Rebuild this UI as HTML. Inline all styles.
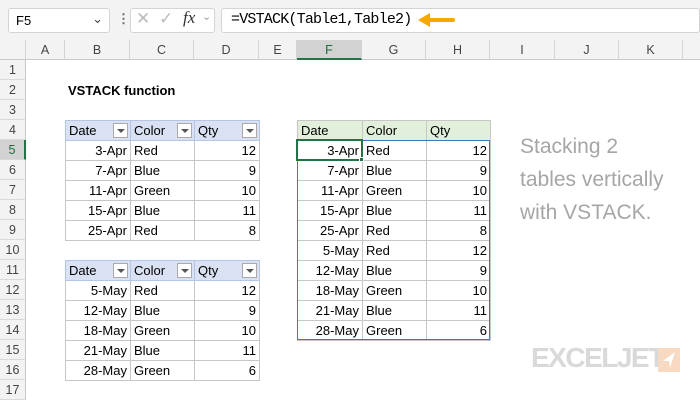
<!DOCTYPE html><html><head><style>
*{box-sizing:border-box;margin:0;padding:0}
body{width:700px;height:400px;overflow:hidden;background:#fff;font-family:"Liberation Sans",Arial,sans-serif;font-size:13px;color:#000;position:relative}
.a{position:absolute}
.ch{position:absolute;top:40px;height:20px;line-height:20px;text-align:center;color:#444;font-size:12.5px;border-right:1px solid #d4d4d4;border-bottom:1px solid #c8c8c8;background:#f3f3f3}
.rh{position:absolute;left:0;width:26px;height:20px;line-height:20px;text-align:center;color:#444;font-size:12.5px;border-bottom:1px solid #d9d9d9;background:#f3f3f3;border-right:1px solid #c8c8c8}
table{position:absolute;border-collapse:collapse;table-layout:fixed}
td{height:20px;padding:0 3px;border:1px solid #c6c6c6;white-space:nowrap;overflow:hidden;line-height:18px}
td.r{text-align:right}
.t1 tr:first-child td{background:#d9e1f2;border-color:#b4c6e7}
.t3 tr:first-child td{background:#e2efda}
.dd{float:right;width:15px;height:15px;border:1px solid #aaa;background:#fff;margin-top:1px;margin-right:-1px;position:relative}
.dd:after{content:"";position:absolute;left:3px;top:5px;border-left:4px solid transparent;border-right:4px solid transparent;border-top:4px solid #555}
</style></head><body>
<div class="a" style="left:0;top:0;width:700px;height:40px;background:#f3f3f3"></div>
<div class="a" style="left:8px;top:8px;width:102px;height:25px;background:#fff;border:1px solid #d4d4d4;border-radius:3px;padding:4px 7px;font-size:13px">F5<span style="position:absolute;right:6px;top:2px;color:#444">&#8964;</span></div>
<div class="a" style="left:117px;top:11px;color:#666;font-weight:bold">&#8942;</div>
<div class="a" style="left:130px;top:8px;width:85px;height:25px;background:#fff;border:1px solid #d4d4d4;border-radius:3px"></div>
<div class="a" style="left:136px;top:9px;color:#bbb;font-size:17px">&#x2715;</div>
<div class="a" style="left:159px;top:9px;color:#bbb;font-size:17px">&#x2713;</div>
<div class="a" style="left:183px;top:8px;font-family:'Liberation Serif',serif;font-style:italic;font-size:17px;color:#333">fx</div>
<div class="a" style="left:202px;top:10px;color:#999;font-size:11px">&#8964;</div>
<div class="a" style="left:221px;top:8px;width:479px;height:25px;background:#fff;border:1px solid #d4d4d4;border-radius:3px"></div>
<div class="a" style="left:231px;top:11px;font-family:'Liberation Mono',monospace;font-size:15px;letter-spacing:-0.8px">=VSTACK(Table1,Table2)</div>
<svg class="a" style="left:416px;top:12px" width="40" height="16"><path d="M10 8H37" stroke="#f5a800" stroke-width="4" stroke-linecap="round"/><path d="M2 8L14 1V15Z" fill="#f5a800"/></svg>
<div class="ch" style="left:0;width:26px"></div>
<div class="ch" style="left:26px;width:39px">A</div><div class="ch" style="left:65px;width:65px">B</div><div class="ch" style="left:130px;width:64px">C</div><div class="ch" style="left:194px;width:65px">D</div><div class="ch" style="left:259px;width:38px">E</div><div class="ch" style="left:297px;width:65px;background:#d2d2d2;color:#1d6b3a;border-bottom:2px solid #217346">F</div><div class="ch" style="left:362px;width:64px">G</div><div class="ch" style="left:426px;width:64px">H</div><div class="ch" style="left:490px;width:65px">I</div><div class="ch" style="left:555px;width:64px">J</div><div class="ch" style="left:619px;width:64px">K</div><div class="ch" style="left:683px;width:30px"></div>
<div class="rh" style="top:60px">1</div><div class="rh" style="top:80px">2</div><div class="rh" style="top:100px">3</div><div class="rh" style="top:120px">4</div><div class="rh" style="top:140px;background:#d2d2d2;color:#1d6b3a;border-right:2px solid #217346">5</div><div class="rh" style="top:160px">6</div><div class="rh" style="top:180px">7</div><div class="rh" style="top:200px">8</div><div class="rh" style="top:220px">9</div><div class="rh" style="top:240px">10</div><div class="rh" style="top:260px">11</div><div class="rh" style="top:280px">12</div><div class="rh" style="top:300px">13</div><div class="rh" style="top:320px">14</div><div class="rh" style="top:340px">15</div><div class="rh" style="top:360px">16</div><div class="rh" style="top:380px">17</div>
<div class="a" style="left:68px;top:83px;font-weight:bold">VSTACK function</div>
<table class="t1" style="left:65px;top:120px;width:194px"><colgroup><col style="width:65px"><col style="width:64px"><col style="width:65px"></colgroup>
<tr><td>Date<span class="dd"></span></td><td>Color<span class="dd"></span></td><td>Qty<span class="dd"></span></td></tr>
<tr><td class="r">3-Apr</td><td>Red</td><td class="r">12</td></tr>
<tr><td class="r">7-Apr</td><td>Blue</td><td class="r">9</td></tr>
<tr><td class="r">11-Apr</td><td>Green</td><td class="r">10</td></tr>
<tr><td class="r">15-Apr</td><td>Blue</td><td class="r">11</td></tr>
<tr><td class="r">25-Apr</td><td>Red</td><td class="r">8</td></tr></table>
<table class="t1" style="left:65px;top:260px;width:194px"><colgroup><col style="width:65px"><col style="width:64px"><col style="width:65px"></colgroup>
<tr><td>Date<span class="dd"></span></td><td>Color<span class="dd"></span></td><td>Qty<span class="dd"></span></td></tr>
<tr><td class="r">5-May</td><td>Red</td><td class="r">12</td></tr>
<tr><td class="r">12-May</td><td>Blue</td><td class="r">9</td></tr>
<tr><td class="r">18-May</td><td>Green</td><td class="r">10</td></tr>
<tr><td class="r">21-May</td><td>Blue</td><td class="r">11</td></tr>
<tr><td class="r">28-May</td><td>Green</td><td class="r">6</td></tr></table>
<table class="t3" style="left:297px;top:120px;width:193px"><colgroup><col style="width:65px"><col style="width:64px"><col style="width:64px"></colgroup>
<tr><td>Date</td><td>Color</td><td>Qty</td></tr>
<tr><td class="r">3-Apr</td><td>Red</td><td class="r">12</td></tr>
<tr><td class="r">7-Apr</td><td>Blue</td><td class="r">9</td></tr>
<tr><td class="r">11-Apr</td><td>Green</td><td class="r">10</td></tr>
<tr><td class="r">15-Apr</td><td>Blue</td><td class="r">11</td></tr>
<tr><td class="r">25-Apr</td><td>Red</td><td class="r">8</td></tr>
<tr><td class="r">5-May</td><td>Red</td><td class="r">12</td></tr>
<tr><td class="r">12-May</td><td>Blue</td><td class="r">9</td></tr>
<tr><td class="r">18-May</td><td>Green</td><td class="r">10</td></tr>
<tr><td class="r">21-May</td><td>Blue</td><td class="r">11</td></tr>
<tr><td class="r">28-May</td><td>Green</td><td class="r">6</td></tr></table>
<div class="a" style="left:297px;top:140px;width:193px;height:200px;border:1.5px solid #4472c4"></div>
<div class="a" style="left:296px;top:139px;width:67px;height:22px;border:2px solid #217346"></div>
<div class="a" style="left:359px;top:157px;width:5px;height:5px;background:#217346;border:1px solid #fff"></div>
<div class="a" style="left:520px;top:130px;color:#a6a6a6;font-size:21px;line-height:33px">Stacking 2<br>tables vertically<br>with VSTACK.</div>
<div class="a" style="left:531px;top:342px;color:#d9d9d9;font-weight:bold;font-size:28px;letter-spacing:-1.5px">EXCELJET</div>
<div class="a" style="left:658px;top:348px;width:22px;height:24px;background:#f8d9c2"></div>
<svg class="a" style="left:658px;top:348px" width="22" height="24"><path d="M17 4L5 13H11L12 20Z" fill="#fff"/></svg>
</body></html>
